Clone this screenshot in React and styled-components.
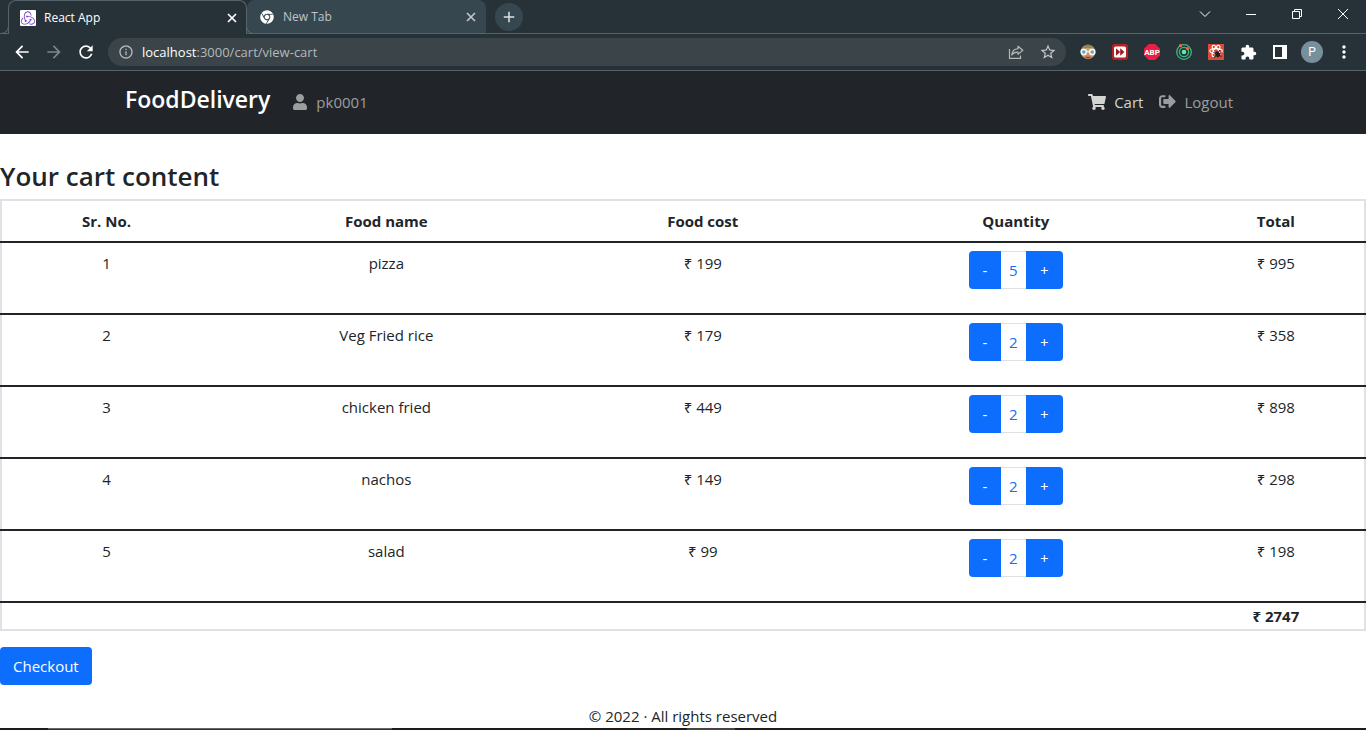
import React, { useState } from "react";
import styled, { createGlobalStyle, css } from "styled-components";
import { FaUser, FaShoppingCart, FaSignOutAlt, FaChrome } from "react-icons/fa";
import { SiRedux } from "react-icons/si";
import {
  MdArrowBack,
  MdArrowForward,
  MdRefresh,
  MdInfoOutline,
  MdStarBorder,
  MdExtension,
  MdMoreVert,
  MdAdd,
} from "react-icons/md";

const frame = "#263238";
const line = "#566469";
const uiFont = '"Open Sans", "Noto Sans", sans-serif';

const GlobalStyle = createGlobalStyle`
  *, *::before, *::after { box-sizing: border-box; }
  body {
    margin: 0;
    background: #fff;
    color: #212529;
    font-family: ${uiFont};
    font-size: 15px;
    line-height: 24px;
  }
  button, input { font: inherit; }
`;

const Page = styled.div`
  display: flex;
  flex-direction: column;
  min-height: 100vh;
`;

const plainButton = css`
  display: inline-flex;
  align-items: center;
  justify-content: center;
  flex: none;
  padding: 0;
  border: 0;
  background: none;
  color: inherit;
`;

/* Browser window */

const TabStrip = styled.header`
  display: flex;
  height: 34px;
  padding-left: 8px;
  background: linear-gradient(${line}, ${line}) left bottom / 100% 1px no-repeat ${frame};
`;

const Tab = styled.div`
  position: relative;
  display: flex;
  align-items: center;
  gap: 8px;
  width: 239px;
  padding: 0 6px 0 11px;
  border-radius: 8px 8px 0 0;
  font-size: 12px;
  ${(p) =>
    p.$active
      ? css`
          z-index: 1;
          background: ${frame};
          border: solid ${line};
          border-width: 1px 1px 0;
          color: #fff;
          &::before,
          &::after {
            content: "";
            position: absolute;
            bottom: 0;
            width: 8px;
            height: 8px;
            border: solid ${line};
          }
          &::before {
            right: 100%;
            border-width: 0 1px 1px 0;
            border-bottom-right-radius: 8px;
            background: ${frame};
          }
          &::after {
            left: 100%;
            border-width: 0 0 1px 1px;
            border-bottom-left-radius: 8px;
          }
        `
      : css`
          background: #37474f;
          border: solid #37474f;
          border-width: 0 1px 1px;
          border-bottom-color: ${line};
          color: #bec4c7;
        `}
`;

const TabTitle = styled.span`
  flex: 1;
`;

const Favicon = styled.span`
  display: flex;
  align-items: center;
  justify-content: center;
  width: 16px;
  height: 16px;
  border-radius: 1px;
  color: ${(p) => p.$color};
  background: ${(p) => p.$fill || "transparent"};
`;

const TabClose = styled.button`
  ${plainButton}
  width: 16px;
  height: 16px;
`;

const NewTab = styled.button`
  ${plainButton}
  width: 28px;
  height: 28px;
  margin: 3px 0 0 9px;
  border-radius: 50%;
  background: #37474f;
  color: #dfe2e4;
`;

const WindowControls = styled.div`
  display: flex;
  margin-left: auto;
`;

const WindowButton = styled.button`
  ${plainButton}
  width: 46px;
  height: 28px;
  color: #fff;
`;

const Toolbar = styled.div`
  display: flex;
  align-items: center;
  height: 37px;
  padding: 0 6px;
  background: ${frame};
  border-bottom: 1px solid ${line};
`;

const ToolButton = styled.button`
  ${plainButton}
  width: 32px;
  height: 28px;
  color: ${(p) => p.$color || "#fff"};
`;

const AddressBar = styled.div`
  display: flex;
  align-items: center;
  flex: 1;
  height: 28px;
  margin: 0 6px;
  padding: 0 2px 0 10px;
  border-radius: 14px;
  background: #3a4449;
  color: #b4b9bb;
  font-size: 13px;
`;

const Url = styled.span`
  flex: 1;
  margin-left: 8px;
`;

const Host = styled.span`
  color: #fff;
`;

const Avatar = styled.span`
  display: flex;
  align-items: center;
  justify-content: center;
  width: 22px;
  height: 22px;
  border-radius: 50%;
  background: #78909c;
  color: #fff;
  font: 12px Roboto, sans-serif;
`;

/* Application */

const NavBar = styled.nav`
  height: 63px;
  background: #212529;
`;

const NavInner = styled.div`
  display: flex;
  align-items: center;
  height: 100%;
  max-width: 1140px;
  margin: 0 auto;
  padding: 0 12px 2px;
`;

const Brand = styled.a`
  margin-right: 14px;
  padding-bottom: 5px;
  color: #fff;
  font-size: 23px;
  font-weight: 600;
  text-decoration: none;
`;

const NavLink = styled.a`
  display: flex;
  align-items: center;
  gap: 8px;
  padding: 0 8px;
  color: ${(p) => (p.$bright ? "#d3d4d4" : "#9b9d9e")};
  text-decoration: none;
`;

const NavEnd = styled.div`
  display: flex;
  margin-left: auto;
`;

const Main = styled.main`
  flex: 1;
  padding-top: 25px;
`;

const Title = styled.h1`
  margin: 0 0 6px;
  font-size: 26px;
  font-weight: 600;
  line-height: 34px;
`;

const CartTable = styled.table`
  width: 100%;
  table-layout: fixed;
  border-collapse: collapse;
  border: 2px solid #dee2e6;
  text-align: center;
`;

const Column = styled.col`
  width: ${(p) => p.$share}%;
`;

const HeadCell = styled.th`
  padding: 8px;
  border-bottom: 2px solid #212529;
  font-weight: 700;
`;

const Cell = styled.td`
  padding: 8px;
  border-bottom: 2px solid #212529;
  vertical-align: top;
`;

const SumCell = styled.td`
  padding: 1px;
  font-weight: 700;
`;

const Stepper = styled.div`
  display: flex;
  width: 94px;
  height: 38px;
  margin: 0 auto 16px;
`;

const StepButton = styled.button`
  ${plainButton}
  flex: ${(p) => (p.$plus ? 37 : 32)};
  background: #0d6efd;
  color: #fff;
  border-radius: ${(p) => (p.$plus ? "0 4px 4px 0" : "4px 0 0 4px")};
`;

const Count = styled.output`
  flex: 25;
  border: solid #dee2e6;
  border-width: 1px 0;
  line-height: 36px;
  color: #0d6efd;
`;

const Checkout = styled.button`
  ${plainButton}
  height: 38px;
  margin: 16px 0;
  padding: 0 13px;
  border-radius: 4px;
  background: #0d6efd;
  color: #fff;
`;

const Footer = styled.footer`
  padding-bottom: 2px;
  line-height: 20px;
  text-align: center;
`;

const TaskbarEdge = styled.div`
  display: flex;
  height: 2px;
  background: #1c1c1c;
`;

const TaskbarSegment = styled.span`
  width: ${(p) => p.$width}px;
  margin-left: ${(p) => p.$gap}px;
  background: ${(p) => p.$fill};
  border-top: ${(p) => (p.$edge ? "1px solid #666" : "0")};
`;

const CloseIcon = () => (
  <svg width="10" height="10" viewBox="0 0 10 10" fill="none" stroke="currentColor" strokeWidth="1.700">
    <path d="m1 1 8 8M9 1 1 9" />
  </svg>
);

const ShareIcon = () => (
  <svg width="16" height="16" viewBox="0 0 16 16" fill="none" stroke="currentColor" strokeWidth="1.2">
    <path d="M1.500 5v9.400h11V11.500" />
    <path d="M10 2.200 14.800 6.300 10 10.400V8.100C7.200 8 5.200 8.900 3.800 11c.3-3.500 2.300-6 6.200-6.400z" strokeLinejoin="round" />
  </svg>
);

const GogglesIcon = () => (
  <svg width="16" height="16" viewBox="0 0 16 16">
    <circle cx="8" cy="8" r="7.200" fill="#d08f63" />
    <path d="M1 6.500C1.500 3 4.500.8 8 .8s6.500 2.200 7 5.700L11 5.200H5z" fill="#9c8354" />
    <path d="M6 4h5l-1 2H6z" fill="#c9a36c" />
    <path d="M5 12.800h6c-1 2.200-5 2.200-6 0z" fill="#8c4a32" />
    <circle cx="3.800" cy="8" r="2.600" fill="#6aa5b8" stroke="#f2f6f7" strokeWidth="1.700" />
    <circle cx="12.200" cy="8" r="2.600" fill="#6aa5b8" stroke="#f2f6f7" strokeWidth="1.700" />
    <path d="M6.500 7.500h3" stroke="#f2f6f7" strokeWidth="1.200" />
  </svg>
);

const SkipIcon = () => (
  <svg width="16" height="16" viewBox="0 0 16 16">
    <rect width="16" height="16" rx="3" fill="#b92024" />
    <rect x="2" y="2.500" width="12" height="11" rx="1.500" fill="#fff" />
    <path d="M4 4.300 8.200 8 4 11.700zM8.200 4.300 12.400 8l-4.200 3.700z" fill="#9d171b" />
  </svg>
);

const AbpBadge = styled.span`
  display: flex;
  align-items: center;
  justify-content: center;
  width: 16px;
  height: 16px;
  clip-path: polygon(30% 0, 70% 0, 100% 30%, 100% 70%, 70% 100%, 30% 100%, 0 70%, 0 30%);
  background: #ed1e45;
  color: #fff;
  font: 700 8px Roboto, sans-serif;
`;

const RadarIcon = () => (
  <svg width="16" height="16" viewBox="0 0 16 16" fill="none">
    <circle cx="8" cy="8" r="7.300" stroke="#3cba82" strokeWidth="1.300" />
    <circle cx="8" cy="8" r="4.600" stroke="#3cba82" strokeWidth="1.300" />
    <circle cx="8" cy="8" r="2.300" fill="#62e6b0" />
    <circle cx="4.500" cy="1.700" r="1.600" fill="#f2693a" />
    <circle cx="11.500" cy="4.600" r="1.600" fill="#f2693a" />
  </svg>
);

const ReactToolsIcon = () => (
  <svg width="16" height="16" viewBox="0 0 16 16" fill="none">
    <rect width="16" height="16" fill="#dc4a38" />
    <g stroke="#fff" strokeWidth="1.100">
      <ellipse cx="8" cy="7" rx="6.300" ry="2.400" />
      <ellipse cx="8" cy="7" rx="6.300" ry="2.400" transform="rotate(60 8 7)" />
      <ellipse cx="8" cy="7" rx="6.300" ry="2.400" transform="rotate(120 8 7)" />
    </g>
    <path d="m5.500 8.500 8 4m-7.500 1.500 6-8m1.500 2.500-7 4" stroke="#2a1b19" />
    <ellipse cx="9.600" cy="10.300" rx="2.300" ry="3.200" fill="#2a1b19" transform="rotate(-25 9.600 10.300)" />
  </svg>
);

const SidePanelIcon = () => (
  <svg width="14" height="14" viewBox="0 0 14 14">
    <path d="M0 0h14v14H0zM2 2v10h7V2z" fill="#fff" fillRule="evenodd" />
  </svg>
);

const controlPaths = [
  ["Search tabs", "M1 3.500 6 8.500l5-5"],
  ["Minimize", "M1 6.500h10"],
  ["Restore", "M1.500 3.500h7v7h-7zM3.500 3.500v-2h7v7h-2"],
  ["Close window", "m1 1 10 10M11 1 1 11"],
];

const extensions = [
  ["Privacy goggles", <GogglesIcon />],
  ["Skip ahead", <SkipIcon />],
  ["Adblock Plus", <AbpBadge>ABP</AbpBadge>],
  ["Radar", <RadarIcon />],
  ["React tools", <ReactToolsIcon />],
  ["Extensions", <MdExtension size={17} />],
  ["Side panel", <SidePanelIcon />],
  ["Profile", <Avatar>P</Avatar>],
  ["Menu", <MdMoreVert size={20} />],
];

const columns = [
  ["Sr. No.", 15.4],
  ["Food name", 25.7],
  ["Food cost", 20.7],
  ["Quantity", 25.2],
  ["Total", 13],
];

const initialItems = [
  { name: "pizza", cost: 199, quantity: 5 },
  { name: "Veg Fried rice", cost: 179, quantity: 2 },
  { name: "chicken fried", cost: 449, quantity: 2 },
  { name: "nachos", cost: 149, quantity: 2 },
  { name: "salad", cost: 99, quantity: 2 },
];

function BrowserChrome() {
  return (
    <>
      <TabStrip>
        <Tab $active>
          <Favicon $color="#764abc" $fill="#fff"><SiRedux size={14} /></Favicon>
          <TabTitle>React App</TabTitle>
          <TabClose aria-label="Close React App"><CloseIcon /></TabClose>
        </Tab>
        <Tab>
          <Favicon $color="#fff"><FaChrome size={14} /></Favicon>
          <TabTitle>New Tab</TabTitle>
          <TabClose aria-label="Close New Tab"><CloseIcon /></TabClose>
        </Tab>
        <NewTab aria-label="New tab"><MdAdd size={18} /></NewTab>
        <WindowControls>
          {controlPaths.map(([label, d]) => (
            <WindowButton key={label} aria-label={label}>
              <svg width="12" height="12" viewBox="0 0 12 12" fill="none" stroke="currentColor">
                <path d={d} />
              </svg>
            </WindowButton>
          ))}
        </WindowControls>
      </TabStrip>
      <Toolbar>
        <ToolButton aria-label="Back"><MdArrowBack size={20} /></ToolButton>
        <ToolButton aria-label="Forward" $color="#7d8588"><MdArrowForward size={20} /></ToolButton>
        <ToolButton aria-label="Reload"><MdRefresh size={20} /></ToolButton>
        <AddressBar>
          <MdInfoOutline size={16} />
          <Url><Host>localhost</Host>:3000/cart/view-cart</Url>
          <ToolButton aria-label="Share" $color="#b4b9bb"><ShareIcon /></ToolButton>
          <ToolButton aria-label="Bookmark" $color="#c4c8ca"><MdStarBorder size={18} /></ToolButton>
        </AddressBar>
        {extensions.map(([label, icon]) => (
          <ToolButton key={label} aria-label={label}>{icon}</ToolButton>
        ))}
      </Toolbar>
    </>
  );
}

export default function App() {
  const [items, setItems] = useState(initialItems);
  const change = (index, by) =>
    setItems(items.map((item, i) => (i === index ? { ...item, quantity: Math.max(0, item.quantity + by) } : item)));
  const sum = items.reduce((total, item) => total + item.cost * item.quantity, 0);

  return (
    <Page>
      <GlobalStyle />
      <BrowserChrome />
      <NavBar>
        <NavInner>
          <Brand href="#home">FoodDelivery</Brand>
          <NavLink href="#profile"><FaUser size={16} />pk0001</NavLink>
          <NavEnd>
            <NavLink href="#cart" $bright><FaShoppingCart size={18} />Cart</NavLink>
            <NavLink href="#logout"><FaSignOutAlt size={17} />Logout</NavLink>
          </NavEnd>
        </NavInner>
      </NavBar>
      <Main>
        <Title>Your cart content</Title>
        <CartTable>
          <colgroup>
            {columns.map(([name, share]) => <Column key={name} $share={share} />)}
          </colgroup>
          <thead>
            <tr>{columns.map(([name]) => <HeadCell key={name} scope="col">{name}</HeadCell>)}</tr>
          </thead>
          <tbody>
            {items.map((item, index) => (
              <tr key={item.name}>
                <Cell>{index + 1}</Cell>
                <Cell>{item.name}</Cell>
                <Cell>₹ {item.cost}</Cell>
                <Cell>
                  <Stepper>
                    <StepButton aria-label={`Less ${item.name}`} onClick={() => change(index, -1)}>-</StepButton>
                    <Count>{item.quantity}</Count>
                    <StepButton $plus aria-label={`More ${item.name}`} onClick={() => change(index, 1)}>+</StepButton>
                  </Stepper>
                </Cell>
                <Cell>₹ {item.cost * item.quantity}</Cell>
              </tr>
            ))}
          </tbody>
          <tfoot>
            <tr>
              <SumCell colSpan={4} />
              <SumCell>₹ {sum}</SumCell>
            </tr>
          </tfoot>
        </CartTable>
        <Checkout>Checkout</Checkout>
      </Main>
      <Footer>© 2022 · All rights reserved</Footer>
      <TaskbarEdge>
        <TaskbarSegment $gap={48} $width={344} $fill="#333" $edge />
        <TaskbarSegment $gap={295} $width={48} $fill="#444" />
      </TaskbarEdge>
    </Page>
  );
}
